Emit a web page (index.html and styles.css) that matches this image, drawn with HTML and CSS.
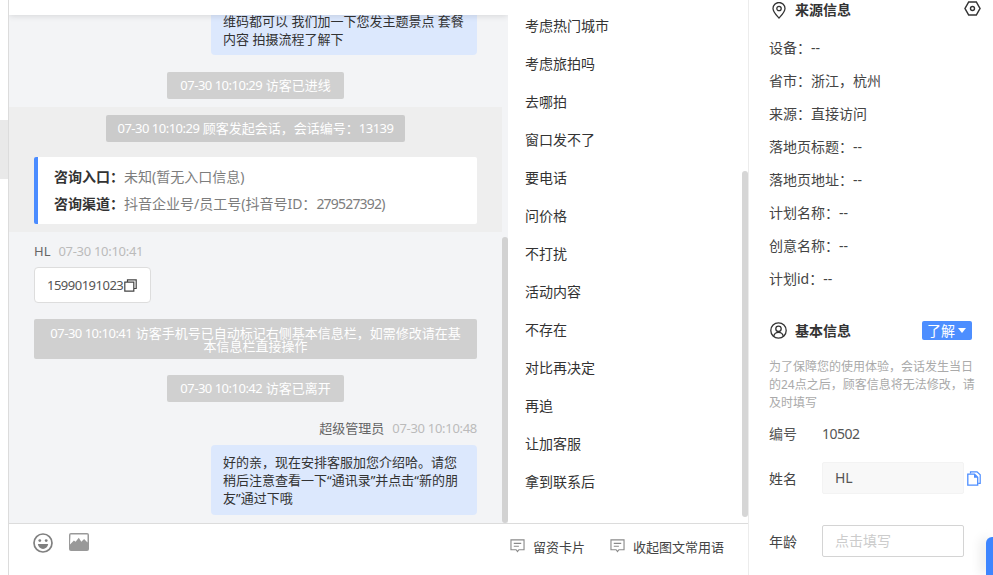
FILE: index.html
```html
<!DOCTYPE html>
<html lang="zh">
<head>
<meta charset="utf-8">
<title>会话</title>
<link rel="stylesheet" href="styles.css">
</head>
<body>
<div class="app">
  <aside class="rail"><div class="rail-tab"></div></aside>
  <main class="work">
    <div class="work-top">
      <section class="chat">
        <div class="chat-head"></div>
        <div class="stream">
          <div class="bubble-row first">
            <div class="bubble">维码都可以 我们加一下您发主题景点 套餐<br>内容 拍摄流程了解下</div>
          </div>
          <div class="sys-row gap-17"><span class="sys"><span class="t">07-30 10:10:29</span> 访客已进线</span></div>
          <div class="session">
            <div class="sys-row"><span class="sys tight"><span class="t">07-30 10:10:29</span> 顾客发起会话，会话编号：<span class="t">13139</span></span></div>
            <div class="card">
              <p class="card-line"><b>咨询入口：</b>未知(暂无入口信息)</p>
              <p class="card-line"><b>咨询渠道：</b>抖音企业号/员工号(抖音号ID：<span class="t">279527392</span>)</p>
            </div>
          </div>
          <div class="meta"><span class="who">HL</span><span class="when">07-30 10:10:41</span></div>
          <div class="phone"><span class="t">15990191023</span><svg class="copy-ic" viewBox="0 0 13 13" width="13" height="13"><path d="M3.500 3V.8h8.700v8.700H10M.8 3.200h9v9h-9z" fill="none" stroke="#444" stroke-width="1.200"/></svg></div>
          <div class="sys-block"><span class="t">07-30 10:10:41</span> 访客手机号已自动标记右侧基本信息栏，如需修改请在基本信息栏直接操作</div>
          <div class="sys-row gap-16"><span class="sys"><span class="t">07-30 10:10:42</span> 访客已离开</span></div>
          <div class="meta right"><span class="who">超级管理员</span><span class="when">07-30 10:10:48</span></div>
          <div class="bubble-row">
            <div class="bubble">好的亲，现在安排客服加您介绍哈。请您稍后注意查看一下“通讯录”并点击“新的朋友”通过下哦</div>
          </div>
        </div>
        <div class="thumb thumb-chat"></div>
      </section>
      <section class="phrases">
        <ul class="phrase-list">
          <li>考虑热门城市</li>
          <li>考虑旅拍吗</li>
          <li>去哪拍</li>
          <li>窗口发不了</li>
          <li>要电话</li>
          <li>问价格</li>
          <li>不打扰</li>
          <li>活动内容</li>
          <li>不存在</li>
          <li>对比再决定</li>
          <li>再追</li>
          <li>让加客服</li>
          <li>拿到联系后</li>
        </ul>
        <div class="thumb thumb-phrases"></div>
      </section>
    </div>
    <div class="composer">
      <div class="tools">
        <div class="tool-icons">
          <svg viewBox="0 0 20 20" width="20" height="20"><circle cx="10" cy="10" r="9" fill="none" stroke="#808080" stroke-width="1.700"/><circle cx="6.800" cy="7.600" r="1.400" fill="#808080"/><circle cx="13.200" cy="7.600" r="1.400" fill="#808080"/><path d="M4.800 11h10.400c-.4 3-2.600 4.900-5.200 4.900S5.200 14 4.800 11z" fill="#808080"/></svg>
          <svg viewBox="0 0 20 18" width="20" height="18"><rect width="20" height="18" rx="2" fill="#999"/><path d="M1.500 1.500h17v8l-3.400-3.400-2.800 2.600-2.500-3.900-3.200 4-1.700-1.400-3.900 4z" fill="#fff"/></svg>
        </div>
        <div class="tool-actions">
          <span class="tool-link"><svg viewBox="0 0 16 15" width="15" height="14"><path d="M1 1h14v10.500H9.500L8 13.500l-1.500-2H1z" fill="none" stroke="#8a8a8a" stroke-width="1.200"/><path d="M4 4.700h8M4 7.700h5.500" stroke="#8a8a8a" stroke-width="1.200"/></svg>留资卡片</span>
          <span class="tool-link"><svg viewBox="0 0 16 15" width="15" height="14"><path d="M1 1h14v10.500H9.500L8 13.500l-1.500-2H1z" fill="none" stroke="#8a8a8a" stroke-width="1.200"/><path d="M4 4.700h8M4 7.700h5.500" stroke="#8a8a8a" stroke-width="1.200"/></svg>收起图文常用语</span>
        </div>
      </div>
      <p class="composer-text">好的亲，现在安排客服加您介绍哈。</p>
    </div>
  </main>
  <aside class="info">
    <div class="info-head source">
      <svg class="head-ic" viewBox="0 0 14 17" width="14" height="17"><path d="M7 16C4 12.800 1 10 1 6.500a6 6 0 0 1 12 0C13 10 10 12.800 7 16z" fill="none" stroke="#333" stroke-width="1.300"/><circle cx="7" cy="6.500" r="2.200" fill="none" stroke="#333" stroke-width="1.300"/></svg>
      <h3>来源信息</h3>
      <svg class="hex" viewBox="0 0 17 15" width="17" height="15"><path d="M4.700 1h7.600l3.700 6.500-3.700 6.500H4.700L1 7.500z" fill="none" stroke="#333" stroke-width="1.500"/><circle cx="8.500" cy="7.500" r="2" fill="none" stroke="#333" stroke-width="1.400"/></svg>
    </div>
    <ul class="facts">
      <li>设备：--</li>
      <li>省市：浙江，杭州</li>
      <li>来源：直接访问</li>
      <li>落地页标题：--</li>
      <li>落地页地址：--</li>
      <li>计划名称：--</li>
      <li>创意名称：--</li>
      <li>计划id：--</li>
    </ul>
    <div class="info-head basic">
      <svg class="head-ic" viewBox="0 0 17 17" width="17" height="17"><circle cx="8.500" cy="8.500" r="7.700" fill="none" stroke="#333" stroke-width="1.300"/><circle cx="8.500" cy="6.800" r="2.700" fill="none" stroke="#333" stroke-width="1.300"/><path d="M3.700 14.300c.5-2.700 2.300-4 4.800-4s4.300 1.300 4.800 4" fill="none" stroke="#333" stroke-width="1.300"/></svg>
      <h3>基本信息</h3>
      <span class="learn">了解<i class="caret"></i></span>
    </div>
    <p class="note">为了保障您的使用体验，会话发生当日的24点之后，顾客信息将无法修改，请及时填写</p>
    <div class="field plain"><label>编号</label><span class="t">10502</span></div>
    <div class="field name">
      <label>姓名</label>
      <div class="input filled">HL</div>
      <svg class="paste" viewBox="0 0 14 15" width="14" height="15"><path d="M3.500 2.500V.8h6.500l3.200 3v8.500h-2" fill="none" stroke="#4d8eff" stroke-width="1.200"/><path d="M.8 3.200h6.700l3.200 3v8H.8z" fill="#fff" stroke="#4d8eff" stroke-width="1.300"/><path d="M7 3.200v3.600h3.700z" fill="#4d8eff"/></svg>
    </div>
    <div class="field age"><label>年龄</label><div class="input empty">点击填写</div></div>
  </aside>
</div>
<div class="float-tab"></div>
</body>
</html>
```

FILE: styles.css
```css
* { box-sizing: border-box; }
html, body { margin: 0; height: 575px; overflow: hidden; background: #fff; }
body {
  font-family: "Noto Sans", "Noto Sans CJK SC", sans-serif;
  font-size: 13px;
  color: #333;
  position: relative;
}
.t { letter-spacing: -.5px; }
.app { display: flex; height: 575px; }

.rail { width: 9px; flex: none; border-right: 1px solid #dcdcdc; padding-top: 120px; }
.rail-tab { height: 59px; background: #e9e9e9; }

.work { width: 740px; flex: none; display: flex; flex-direction: column; border-right: 1px solid #ececec; }
.work-top { display: flex; height: 523px; flex: none; }

.chat { width: 499px; flex: none; position: relative; overflow: hidden; background: #f3f4f6; padding-right: 6px; }
.chat-head { position: absolute; left: 0; right: 0; top: 0; height: 15px; background: #fff; box-shadow: 0 1px 6px rgba(0,0,0,.12); z-index: 2; }
.stream { display: flex; flex-direction: column; }

.bubble-row { display: flex; justify-content: flex-end; padding-right: 25px; margin-top: 8px; }
.bubble-row.first { margin-top: 0; }
.bubble { width: 266px; padding: 8px 12px; background: #dce8fd; border-radius: 4px; line-height: 18px; color: #333; }
.bubble-row.first .bubble { padding-top: 12px; padding-bottom: 7px; height: 55px; border-radius: 0 0 4px 4px; }

.sys-row { display: flex; justify-content: center; }
.gap-17 { margin-top: 17px; }
.gap-16 { margin-top: 16px; }
.sys { display: block; height: 27px; line-height: 27px; padding: 0 13px; background: #d0d0d0; color: #fff; border-radius: 2px; white-space: nowrap; }
.sys.tight { padding: 0 12px; }

.session { margin-top: 8px; padding: 8px 25px; height: 125px; background: #eee; }
.session .sys { background: #cbcbcb; }
.card { margin-top: 15px; height: 67px; padding: 6px 16px 0; background: #fff; border-left: 4px solid #4b8cff; border-radius: 2px; }
.card-line { margin: 0; height: 27px; line-height: 27px; font-size: 14px; color: #7d7d7d; white-space: nowrap; }
.card-line b { color: #333; font-weight: 700; }
.card-line .t { letter-spacing: -.8px; }

.meta { margin-top: 10px; padding: 0 25px; height: 18px; line-height: 18px; display: flex; gap: 8px; }
.meta.right { justify-content: flex-end; margin-top: 17px; }
.who { color: #666; }
.when { color: #bbb; letter-spacing: -.3px; }

.phone { margin: 7px 0 0 25px; width: 117px; height: 36px; background: #fff; border: 1px solid #ddd; border-radius: 4px; display: flex; align-items: center; padding-left: 12px; color: #555; white-space: nowrap; }
.copy-ic { flex: none; margin-left: 1px; }

.sys-block { margin: 16px 25px 0; height: 40px; padding: 8px 12px 0; background: #d0d0d0; color: #fff; text-align: center; line-height: 13px; border-radius: 2px; }

.thumb { position: absolute; width: 6px; background: #d2d2d2; border-radius: 3px; }
.thumb-chat { right: 0; top: 237px; bottom: 0; }
.thumb-phrases { right: 0; top: 171px; height: 346px; background: #d6d6d6; }

.phrases { width: 240px; flex: none; position: relative; background: #fff; }
.phrase-list { list-style: none; margin: 0; padding: 7px 0 0 17px; }
.phrase-list li { height: 38px; line-height: 38px; font-size: 14px; color: #333; }

.composer { flex: 1; min-height: 0; overflow: hidden; border-top: 1px solid #dcdcdc; background: #fff; }
.tools { display: flex; justify-content: space-between; height: 48px; padding: 0 24px; }
.tool-icons { display: flex; gap: 16px; align-items: flex-start; padding-top: 9px; }
.tool-actions { display: flex; gap: 25px; height: 44px; align-items: center; }
.tool-link { display: flex; align-items: center; gap: 8px; color: #444; }
.composer-text { margin: 0; padding-left: 25px; font-size: 13px; line-height: 18px; color: #999; white-space: nowrap; }

.info { flex: 1; padding: 0 21px 0 20px; min-width: 0; }
.info-head { display: flex; align-items: center; height: 20px; }
.info-head h3 { margin: -2px 0 0; font-size: 14px; font-weight: 700; color: #333; }
.info-head.source { padding-left: 3px; gap: 9px; }
.head-ic { flex: none; }
.hex { margin-left: auto; margin-right: -9px; position: relative; top: -2px; }
.info-head.basic { margin-top: 25px; padding-left: 1px; gap: 8px; }
.info-head.basic h3 { margin-top: 0; }
.facts { list-style: none; margin: 11px 0 0; padding: 0; }
.facts li { height: 33px; line-height: 33px; font-size: 14px; color: #444; white-space: nowrap; }
.learn { margin-left: auto; width: 50px; height: 19px; background: #4d8eff; color: #fff; border-radius: 2px; font-size: 14px; line-height: 19px; padding-left: 5px; display: flex; align-items: center; gap: 3px; }
.caret { width: 0; height: 0; border: 4px solid transparent; border-top: 5px solid #fff; border-bottom: 0; }
.note { margin: 18px 0 0; width: 208px; font-size: 12px; line-height: 18px; color: #aaa; }
.field { display: flex; align-items: center; font-size: 14px; color: #444; }
.field label { width: 53px; flex: none; }
.field.plain { margin-top: 5px; height: 32px; color: #555; }
.field.name { margin-top: 13px; }
.field.age { margin-top: 31px; }
.input { width: 142px; height: 32px; line-height: 30px; padding-left: 12px; border-radius: 2px; flex: none; }
.input.filled { background: #f8f8f8; border: 1px solid #f3f3f3; color: #555; }
.input.empty { border: 1px solid #d4d4d4; color: #ccc; }
.paste { flex: none; margin-left: 3px; }

.float-tab { position: absolute; right: 0; top: 537px; width: 7px; height: 38px; background: #3d85ff; border-radius: 6px 0 0 0; box-shadow: -4px 0 12px rgba(0,0,0,.12); }
```
